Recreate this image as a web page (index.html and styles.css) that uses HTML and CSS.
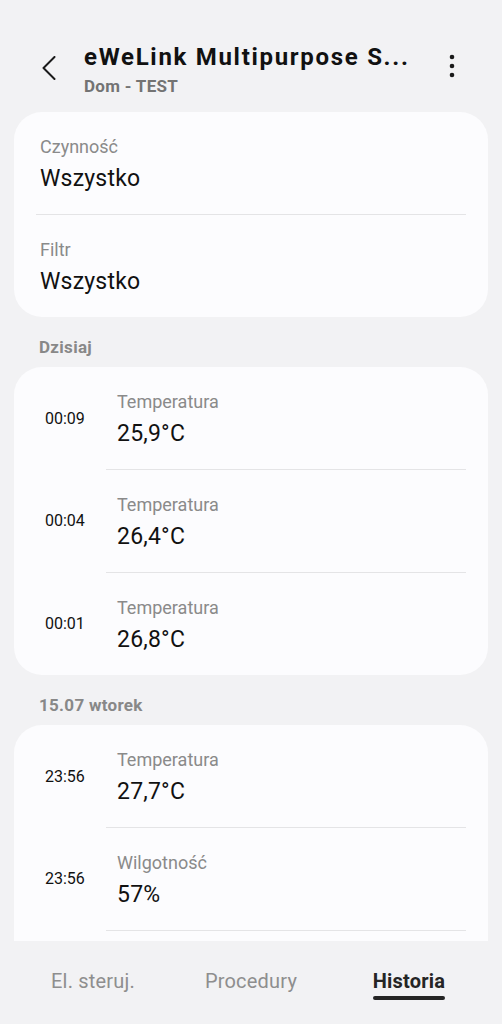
FILE: index.html
```html
<!DOCTYPE html>
<html lang="pl">
<head>
<meta charset="utf-8">
<title>Historia</title>
<link rel="stylesheet" href="styles.css">
</head>
<body>
<div class="page">
  <header class="topbar">
    <svg class="back" width="14" height="24" viewBox="0 0 14 24"><path d="M12.5 1 L1.5 12 L12.5 23" fill="none" stroke="#1a1a1a" stroke-width="2" stroke-linecap="round" stroke-linejoin="round"/></svg>
    <div class="titles">
      <div class="title">eWeLink Multipurpose S...</div>
      <div class="subtitle">Dom - TEST</div>
    </div>
    <svg class="more" width="8" height="24" viewBox="0 0 8 24"><circle cx="4" cy="3" r="2.3" fill="#1a1a1a"/><circle cx="4" cy="12" r="2.3" fill="#1a1a1a"/><circle cx="4" cy="21" r="2.3" fill="#1a1a1a"/></svg>
  </header>

  <main class="content">
    <section class="card">
      <div class="field">
        <div class="label">Czynność</div>
        <div class="value">Wszystko</div>
      </div>
      <div class="field">
        <div class="label">Filtr</div>
        <div class="value">Wszystko</div>
      </div>
    </section>

    <h2 class="section">Dzisiaj</h2>
    <section class="card">
      <div class="entry">
        <div class="time">00:09</div>
        <div class="entry-body">
          <div class="label">Temperatura</div>
          <div class="value">25,9°C</div>
        </div>
      </div>
      <div class="entry">
        <div class="time">00:04</div>
        <div class="entry-body">
          <div class="label">Temperatura</div>
          <div class="value">26,4°C</div>
        </div>
      </div>
      <div class="entry">
        <div class="time">00:01</div>
        <div class="entry-body">
          <div class="label">Temperatura</div>
          <div class="value">26,8°C</div>
        </div>
      </div>
    </section>

    <h2 class="section">15.07 wtorek</h2>
    <section class="card">
      <div class="entry">
        <div class="time">23:56</div>
        <div class="entry-body">
          <div class="label">Temperatura</div>
          <div class="value">27,7°C</div>
        </div>
      </div>
      <div class="entry">
        <div class="time">23:56</div>
        <div class="entry-body">
          <div class="label">Wilgotność</div>
          <div class="value">57%</div>
        </div>
      </div>
      <div class="entry entry-more" aria-hidden="true">
        <div class="time"></div>
        <div class="entry-body"></div>
      </div>
    </section>
  </main>

  <nav class="tabs">
    <div class="tab"><span class="tab-label">El. steruj.</span></div>
    <div class="tab"><span class="tab-label">Procedury</span></div>
    <div class="tab active"><span class="tab-label">Historia</span></div>
  </nav>
</div>
</body>
</html>
```

FILE: styles.css
```css
* { box-sizing: border-box; }

html, body {
  margin: 0;
  padding: 0;
  background: #f2f2f4;
}

body {
  font-family: Roboto, "Noto Sans", "Liberation Sans", sans-serif;
  color: #111;
}

.page {
  width: 502px;
  height: 1024px;
  display: flex;
  flex-direction: column;
  overflow: hidden;
}

/* header */
.topbar {
  height: 112px;
  flex: none;
  display: flex;
  align-items: flex-start;
  padding: 43px 46px 0 42px;
}

.back {
  flex: none;
  margin-top: 13px;
  margin-right: 28px;
}

.titles {
  flex: 1;
  min-width: 0;
}

.title {
  font-size: 24px;
  line-height: 28px;
  font-weight: 700;
  letter-spacing: 1.7px;
  color: #111;
  white-space: nowrap;
}

.subtitle {
  margin-top: 4px;
  font-size: 17px;
  line-height: 22px;
  font-weight: 700;
  letter-spacing: 0.3px;
  color: #737373;
}

.more {
  flex: none;
  margin-top: 11px;
}

/* content */
.content {
  flex: 1;
  min-height: 0;
  overflow: hidden;
  padding: 0 14px;
}

.card {
  background: #fcfcfe;
  border-radius: 28px;
  padding: 0 22px;
}

.field {
  padding: 22px 4px 20px;
}

.field + .field {
  border-top: 1px solid #e4e4e6;
}

.label {
  font-size: 18px;
  line-height: 26px;
  color: #8a8a8a;
}

.value {
  margin-top: 4px;
  font-size: 23px;
  line-height: 30px;
  letter-spacing: 0.2px;
  color: #111;
}

.section {
  margin: 19px 0 9px;
  padding-left: 25px;
  font-size: 17px;
  line-height: 22px;
  font-weight: 700;
  letter-spacing: 0.3px;
  color: #888;
}

.entry {
  display: flex;
}

.time {
  flex: none;
  width: 70px;
  padding-left: 9px;
  align-self: center;
  font-size: 16px;
  color: #111;
}

.entry-body {
  flex: 1;
  padding: 22px 0 20px 11px;
}

.entry + .entry .entry-body {
  border-top: 1px solid #e4e4e6;
}

.entry-more .entry-body {
  height: 40px;
  padding: 0;
}

/* bottom tabs */
.tabs {
  flex: none;
  height: 83px;
  display: grid;
  grid-template-columns: repeat(3, 1fr);
  padding: 28px 14px 0;
  background: #f2f2f4;
}

.tab {
  display: flex;
  justify-content: center;
  align-items: flex-start;
}

.tab-label {
  display: inline-flex;
  flex-direction: column;
  font-size: 20px;
  line-height: 24px;
  letter-spacing: 0.2px;
  color: #8e8e8e;
}

.tab.active .tab-label {
  font-weight: 700;
  color: #252525;
}

.tab.active .tab-label::after {
  content: "";
  display: block;
  height: 3.5px;
  margin-top: 3px;
  border-radius: 2px;
  background: #252525;
}
```
